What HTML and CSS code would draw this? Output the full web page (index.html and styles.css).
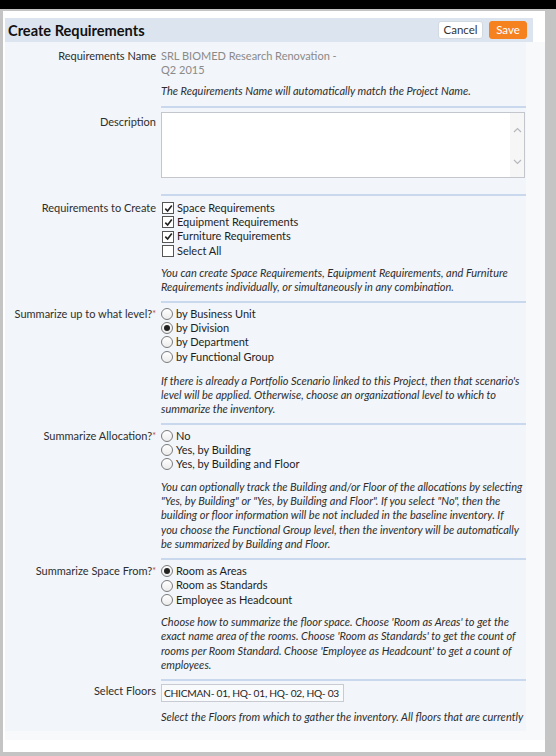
FILE: index.html
```html
<!DOCTYPE html>
<html>
<head>
<meta charset="utf-8">
<link rel="stylesheet" href="styles.css">
</head>
<body>
<div class="topbar"></div>
<div class="window">
  <div class="panel">
    <div class="header">
      <h1 class="title">Create Requirements</h1>
      <div class="actions">
        <button class="btn btn-cancel">Cancel</button>
        <button class="btn btn-save">Save</button>
      </div>
    </div>
    <div class="scroll">
      <div class="form">
        <div class="row row-first">
          <div class="label">Requirements Name</div>
          <div class="field">
            <div class="value">SRL BIOMED Research Renovation -<br>Q2 2015</div>
            <div class="help help-name">The Requirements Name will automatically match the Project Name.</div>
          </div>
        </div>

        <div class="row row-desc">
          <div class="label">Description</div>
          <div class="field">
            <div class="textarea">
              <div class="ta-body"></div>
              <div class="ta-scroll">
                <svg width="9" height="6" viewBox="0 0 9 6"><path d="M1 5 L4.5 1.5 L8 5" fill="none" stroke="#b5b8bd" stroke-width="1.2"/></svg>
                <svg width="9" height="6" viewBox="0 0 9 6"><path d="M1 1 L4.5 4.5 L8 1" fill="none" stroke="#b5b8bd" stroke-width="1.2"/></svg>
              </div>
            </div>
          </div>
        </div>

        <div class="row row-opts">
          <div class="label">Requirements to Create</div>
          <div class="field">
            <div class="options">
              <div class="opt"><span class="cb checked"><svg width="9" height="9" viewBox="0 0 9 9"><path d="M1.3 4.6 L3.6 7 L7.8 1.4" fill="none" stroke="#222" stroke-width="1.6"/></svg></span>Space Requirements</div>
              <div class="opt"><span class="cb checked"><svg width="9" height="9" viewBox="0 0 9 9"><path d="M1.3 4.6 L3.6 7 L7.8 1.4" fill="none" stroke="#222" stroke-width="1.6"/></svg></span>Equipment Requirements</div>
              <div class="opt"><span class="cb checked"><svg width="9" height="9" viewBox="0 0 9 9"><path d="M1.3 4.6 L3.6 7 L7.8 1.4" fill="none" stroke="#222" stroke-width="1.6"/></svg></span>Furniture Requirements</div>
              <div class="opt"><span class="cb"></span>Select All</div>
            </div>
            <div class="help help-a">You can create Space Requirements, Equipment Requirements, and Furniture<br>Requirements individually, or simultaneously in any combination.</div>
          </div>
        </div>

        <div class="row row-opts">
          <div class="label">Summarize up to what level?<span class="req">*</span></div>
          <div class="field">
            <div class="options">
              <div class="opt"><span class="rb"></span>by Business Unit</div>
              <div class="opt"><span class="rb on"></span>by Division</div>
              <div class="opt"><span class="rb"></span>by Department</div>
              <div class="opt"><span class="rb"></span>by Functional Group</div>
            </div>
            <div class="help help-b">If there is already a Portfolio Scenario linked to this Project, then that scenario's<br>level will be applied. Otherwise, choose an organizational level to which to<br>summarize the inventory.</div>
          </div>
        </div>

        <div class="row row-opts">
          <div class="label">Summarize Allocation?<span class="req">*</span></div>
          <div class="field">
            <div class="options">
              <div class="opt"><span class="rb"></span>No</div>
              <div class="opt"><span class="rb"></span>Yes, by Building</div>
              <div class="opt"><span class="rb"></span>Yes, by Building and Floor</div>
            </div>
            <div class="help">You can optionally track the Building and/or Floor of the allocations by selecting<br>"Yes, by Building" or "Yes, by Building and Floor". If you select "No", then the<br>building or floor information will be not included in the baseline inventory. If<br>you choose the Functional Group level, then the inventory will be automatically<br>be summarized by Building and Floor.</div>
          </div>
        </div>

        <div class="row row-opts">
          <div class="label">Summarize Space From?<span class="req">*</span></div>
          <div class="field">
            <div class="options">
              <div class="opt"><span class="rb on"></span>Room as Areas</div>
              <div class="opt"><span class="rb"></span>Room as Standards</div>
              <div class="opt"><span class="rb"></span>Employee as Headcount</div>
            </div>
            <div class="help">Choose how to summarize the floor space. Choose 'Room as Areas' to get the<br>exact name area of the rooms. Choose 'Room as Standards' to get the count of<br>rooms per Room Standard. Choose 'Employee as Headcount' to get a count of<br>employees.</div>
          </div>
        </div>

        <div class="row row-floors">
          <div class="label">Select Floors</div>
          <div class="field">
            <div class="input">CHICMAN- 01, HQ- 01, HQ- 02, HQ- 03</div>
            <div class="help">Select the Floors from which to gather the inventory. All floors that are currently</div>
          </div>
        </div>
      </div>
      <div class="vtrack"></div>
    </div>
  </div>
</div>
</body>
</html>
```

FILE: styles.css
```css
* { box-sizing: border-box; }
html, body { margin: 0; padding: 0; }
body {
  background: #000;
  width: 556px;
  height: 756px;
  overflow: hidden;
  font-family: Lato, "Liberation Sans", sans-serif;
  font-size: 11px;
  color: #333;
}
.topbar { height: 9px; background: #000; }
.window {
  height: 747px;
  background: #c4c4c4;
  padding: 2px 11px 4px 3px;
}
.panel {
  height: 741px;
  background: #fff;
  padding: 7px 0 12px 2px;
  display: flex;
  flex-direction: column;
}
.header {
  height: 24px;
  margin-right: 12px;
  background: #dce4ef;
  display: flex;
  align-items: center;
  justify-content: space-between;
  padding: 0 6px 0 3px;
}
.title {
  margin: 0;
  font-size: 14.6px;
  font-weight: 700;
  color: #111;
}
.actions { display: flex; gap: 6px; }
.btn {
  font-family: inherit;
  font-size: 11.5px;
  height: 18px;
  padding: 0;
  border-radius: 3px;
  cursor: pointer;
  line-height: 16px;
}
.btn-cancel {
  background: #fff;
  border: 1px solid #d3d9e1;
  color: #333;
  width: 45px;
}
.btn-save {
  background: #f5821f;
  border: 1px solid #f5821f;
  color: #fff;
  width: 38px;
}
.scroll {
  flex: 1;
  display: flex;
  background: #f7f9fb;
  overflow: hidden;
}
.form {
  width: 521px;
  background: #f2f5f9;
  padding-bottom: 9px;
  margin-bottom: 9px;
}
.vtrack { flex: 1; }
.row {
  display: grid;
  grid-template-columns: 151px 365px;
  column-gap: 5px;
  line-height: 14.3px;
}
.label {
  text-align: right;
  color: #2e2e2e;
  white-space: nowrap;
}
.req { color: #b5473a; font-size: 9px; vertical-align: top; }
.field { border-top: 2px solid #c9d8ec; }
.row-first .field { border-top: none; padding: 7px 0 8px; }
.row-first .label { padding-top: 7px; }
.value { color: #8a8a8a; }
.help {
  font-style: italic;
  color: #2e2e2e;
  margin-top: 8px;
  white-space: nowrap;
}
.help-name { margin-top: 6px; }
.row-desc .field { padding: 4px 0 16px; }
.row-desc .label { padding-top: 9px; }
.textarea {
  height: 66px;
  width: 364px;
  background: #fff;
  border: 1px solid #c3c7cd;
  display: flex;
}
.ta-body { flex: 1; }
.ta-scroll {
  width: 14px;
  background: #f6f6f6;
  display: flex;
  flex-direction: column;
  justify-content: space-between;
  align-items: center;
  padding: 14px 0 12px;
}
.ta-scroll svg { display: block; }
.row-opts .field { padding: 4px 0 6px; }
.row-opts .label { padding-top: 6px; }
.row-opts:nth-child(3) .field { padding-top: 5px; }
.row-opts:nth-child(3) .label { padding-top: 7px; }
.row-opts:nth-child(4) .help { margin-top: 10px; }
.row-opts:nth-child(5) .field,
.row-opts:nth-child(6) .field { padding-bottom: 7px; }
.opt {
  display: flex;
  align-items: center;
  color: #1e1e1e;
  height: 14.3px;
  white-space: nowrap;
}
.cb {
  width: 12px;
  height: 12px;
  margin: 0 3px 0 1px;
  border: 1px solid #555;
  background: #fff;
  display: flex;
  align-items: center;
  justify-content: center;
  flex: none;
}
.cb svg { display: block; }
.rb {
  width: 12px;
  height: 12px;
  margin-right: 3px;
  border: 1px solid #7a7a7a;
  border-radius: 50%;
  background: linear-gradient(#fff, #ececec);
  flex: none;
  display: flex;
  align-items: center;
  justify-content: center;
}
.rb.on::after {
  content: "";
  width: 6px;
  height: 6px;
  border-radius: 50%;
  background: #222;
}
.row-floors .field { padding-top: 3px; }
.row-floors .label { padding-top: 5px; }
.input {
  width: 183px;
  height: 18px;
  border: 1px solid #c8ccd2;
  background: #f9fafc;
  color: #1e1e1e;
  padding: 0 2px;
  font-size: 10.2px;
  letter-spacing: -0.25px;
  line-height: 16px;
  white-space: nowrap;
  overflow: hidden;
}
```
